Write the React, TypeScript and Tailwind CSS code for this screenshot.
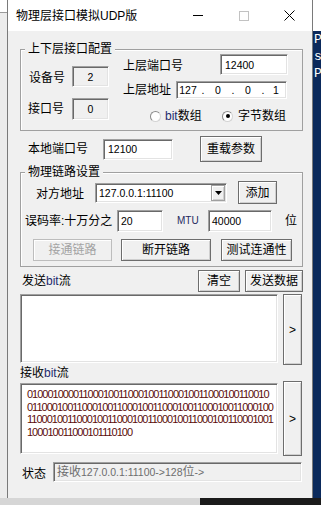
import React from "react";

const sunken =
  "border border-t-[#a0a0a0] border-l-[#a0a0a0] border-r-white border-b-white shadow-[inset_1px_1px_0_#696969,inset_-1px_-1px_0_#e3e3e3]";
const raised =
  "border border-[#6d6d6d] bg-[#f0f0f0] shadow-[inset_1px_1px_0_#ffffff,inset_-1px_-1px_0_#cfcfcf]";

function Btn({
  className,
  children,
  disabled,
}: {
  className: string;
  children: React.ReactNode;
  disabled?: boolean;
}) {
  const look = disabled
    ? "border border-[#bdbdbd] bg-[#f0f0f0] text-[#a3a3a3] shadow-[inset_1px_1px_0_#ffffff]"
    : raised + " text-black";
  return (
    <div className={`flex items-center justify-center text-[12px] leading-none ${look} ${className}`}>
      {children}
    </div>
  );
}

function Group({
  title,
  className,
  children,
}: {
  title: string;
  className: string;
  children: React.ReactNode;
}) {
  return (
    <div className={`relative border border-[#a0a0a0] shadow-[inset_1px_1px_0_#ffffff] ${className}`}>
      <span className="absolute left-[4px] top-[-8px] bg-[#f0f0f0] px-[3px] text-[12px] leading-[14px]">
        {title}
      </span>
      {children}
    </div>
  );
}

function Radio({ checked }: { checked?: boolean }) {
  return (
    <span className="w-[11px] h-[11px] rounded-full bg-white border border-t-[#8a8a8a] border-l-[#8a8a8a] border-r-[#d4d4d4] border-b-[#d4d4d4] flex items-center justify-center">
      {checked && <span className="w-[4px] h-[4px] rounded-full bg-black" />}
    </span>
  );
}

const recv = [
  "010001000011000100110001001100010011000100110010",
  "0110001001100010011000100110001001100010011000100",
  "1100010011000100110001001100010011000100110001001",
  "100010011000101110100",
];

export default function App() {
  return (
    <div className="w-[321px] h-[505px] overflow-hidden flex flex-col bg-[#1b1b1b] font-['Liberation_Sans','Noto_Sans_CJK_SC',sans-serif] text-black">
      <div className="flex h-[498px]">
        {/* desktop behind, left */}
        <div className="w-[7px] flex flex-col bg-[#ececec]">
          <div className="h-[13px] bg-white border-b border-[#9a9a9a]" />
        </div>

        {/* window */}
        <div className="w-[306px] flex flex-col border-l border-r border-[#7a7a7a] bg-[#f0f0f0]">
          {/* title bar */}
          <div className="h-[31px] bg-white flex items-center pl-[8px]">
            <span className="text-[12px] leading-none">物理层接口模拟UDP版</span>
            <div className="ml-auto flex h-full">
              <div className="w-[46px] flex items-center justify-center">
                <div className="w-[10px] h-px bg-black" />
              </div>
              <div className="w-[46px] flex items-center justify-center">
                <div className="w-[10px] h-[10px] border border-[#c2c2c2]" />
              </div>
              <div className="w-[45px] flex items-center justify-center">
                <svg width="11" height="11" viewBox="0 0 11 11">
                  <path d="M0.5 0.5 L10.5 10.5 M10.5 0.5 L0.5 10.5" stroke="#000" strokeWidth="1" />
                </svg>
              </div>
            </div>
          </div>

          {/* body */}
          <div className="flex-1 pl-[12px] text-[12px] leading-[14px]">
            <div className="w-[283px] flex flex-col">
              <Group title="上下层接口配置" className="mt-[18px] h-[82px] flex">
                <div className="pl-[8px] pt-[16px] w-[88px] flex flex-col">
                  <div className="flex items-center h-[21px]">
                    <span className="w-[43px] mt-[3px]">设备号</span>
                    <div className={`${sunken} w-[37px] h-[21px] bg-[#f0f0f0] flex items-center justify-center text-[10.5px]`}>
                      2
                    </div>
                  </div>
                  <div className="flex items-center h-[22px] mt-[11px]">
                    <span className="w-[43px] -ml-[1px] mr-[1px]">接口号</span>
                    <div className={`${sunken} w-[37px] h-[22px] bg-[#f0f0f0] flex items-center justify-center text-[10.5px]`}>
                      0
                    </div>
                  </div>
                </div>
                <div className="ml-[14px] pt-[4px] flex flex-col">
                  <div className="flex items-center h-[21px]">
                    <span className="w-[97px] mt-[3px]">上层端口号</span>
                    <div className={`${sunken} w-[68px] h-[21px] bg-white flex items-center pl-[4px] text-[10.5px]`}>
                      12400
                    </div>
                  </div>
                  <div className="flex items-center h-[18px] mt-[6px]">
                    <span className="w-[53px]">上层地址</span>
                    <div className={`${sunken} w-[111px] h-[18px] bg-white flex items-center text-[10.5px]`}>
                      <span className="w-[22px] text-center">127</span>
                      <span className="w-[8px] text-center">.</span>
                      <span className="w-[22px] text-center">0</span>
                      <span className="w-[8px] text-center">.</span>
                      <span className="w-[22px] text-center">0</span>
                      <span className="w-[8px] text-center">.</span>
                      <span className="w-[18px] text-center">1</span>
                    </div>
                  </div>
                  <div className="flex items-center h-[12px] mt-[11px] pl-[27px]">
                    <div className="w-[72px] flex items-center">
                      <Radio />
                      <span className="ml-[4px]">
                        <span className="text-[#1f2a6e]">bit</span>数组
                      </span>
                    </div>
                    <Radio checked />
                    <span className="ml-[5px]">字节数组</span>
                  </div>
                </div>
              </Group>

              {/* local port */}
              <div className="mt-[5px] h-[26px] flex items-center pl-[8px]">
                <span className="w-[60px]">本地端口号</span>
                <div className={`${sunken} ml-[15px] w-[70px] h-[21px] bg-white flex items-center pl-[4px] text-[10.5px]`}>
                  12100
                </div>
                <Btn className="ml-[27px] w-[62px] h-[26px]">重载参数</Btn>
              </div>

              <Group title="物理链路设置" className="mt-[10px] h-[95px] flex flex-col pt-[8px]">
                <div className="h-[23px] flex items-center pl-[15px]">
                  <span className="w-[48px] mt-[2px]">对方地址</span>
                  <div className={`${sunken} ml-[11px] w-[132px] h-[20px] bg-white flex items-center pl-[3px] pr-[1px] text-[10.5px]`}>
                    <span className="flex-1">127.0.0.1:11100</span>
                    <div className={`${raised} w-[14px] h-[16px] flex items-center justify-center border-[#a0a0a0]`}>
                      <svg width="7" height="4" viewBox="0 0 7 4">
                        <path d="M0 0 H7 L3.5 4 Z" fill="#000" />
                      </svg>
                    </div>
                  </div>
                  <Btn className="ml-[11px] w-[39px] h-[23px]">添加</Btn>
                </div>
                <div className="h-[22px] mt-[6px] flex items-center pl-[4px]">
                  <span className="w-[88px]">误码率:十万分之</span>
                  <div className={`${sunken} ml-[4px] w-[46px] h-[22px] bg-white flex items-center pl-[3px] text-[10.5px]`}>
                    20
                  </div>
                  <span className="ml-[14px] w-[20px] text-[10px] text-[#1f2a5e]">MTU</span>
                  <div className={`${sunken} ml-[11px] w-[64px] h-[22px] bg-white flex items-center pl-[3px] text-[10.5px]`}>
                    40000
                  </div>
                  <span className="ml-[13px]">位</span>
                </div>
                <div className="h-[22px] mt-[7px] flex items-center pl-[12px]">
                  <Btn disabled className="w-[79px] h-[22px]">
                    接通链路
                  </Btn>
                  <Btn className="ml-[9px] w-[90px] h-[22px]">断开链路</Btn>
                  <Btn className="ml-[10px] w-[71px] h-[22px]">测试连通性</Btn>
                </div>
              </Group>

              {/* send */}
              <div className="mt-[3px] h-[22px] flex items-center pl-[2px]">
                <span>
                  发送<span className="text-[#1f2a6e]">bit</span>流
                </span>
                <div className="ml-auto flex gap-[5px]">
                  <Btn className="w-[42px] h-[22px]">清空</Btn>
                  <Btn className="w-[58px] h-[22px]">发送数据</Btn>
                </div>
              </div>
              <div className="mt-[2px] flex items-start">
                <div className={`${sunken} w-[258px] h-[69px] bg-white`} />
                <Btn className="ml-[5px] w-[19px] h-[71px] text-[#1f2a6e]">&gt;</Btn>
              </div>

              {/* receive */}
              <div className="h-[16px] flex items-center">
                <span>
                  接收<span className="text-[#1f2a6e]">bit</span>流
                </span>
              </div>
              <div className="flex items-start">
                <div className={`${sunken} mt-[2px] w-[258px] h-[71px] bg-white pl-[6px] pt-[4px] text-[11px] leading-[12.7px] tracking-[-1px] text-[#5c0c0c]`}>
                  {recv.map((l) => (
                    <div key={l}>{l}</div>
                  ))}
                </div>
                <Btn className="ml-[5px] w-[19px] h-[75px] text-[#1f2a6e]">&gt;</Btn>
              </div>

              {/* status */}
              <div className="mt-[6px] h-[20px] flex items-center pl-[2px]">
                <span className="w-[24px] mt-[3px]">状态</span>
                <div className={`${sunken} ml-[7px] w-[249px] h-[20px] bg-[#f0f0f0] flex items-center pl-[3px] text-[#6d6d6d]`}>
                  接收<span className="text-[10.5px]">127.0.0.1:11100-&gt;128</span>位<span className="text-[10.5px]">-&gt;</span>
                </div>
              </div>
            </div>
          </div>
        </div>

        {/* desktop behind, right */}
        <div className="w-[8px] flex flex-col">
          <div className="h-[31px] bg-white" />
          <div className="flex-1 bg-[#0b2a5c] text-white font-['Liberation_Mono',monospace] text-[13px] leading-[17px] pl-[1px] overflow-hidden">
            <div>P</div>
            <div>s</div>
            <div>P</div>
          </div>
        </div>
      </div>
      <div className="flex h-[7px]">
        <div className="w-[200px] bg-[#d6d6d6]" />
        <div className="flex-1 bg-[#1b1b1b]" />
      </div>
    </div>
  );
}
